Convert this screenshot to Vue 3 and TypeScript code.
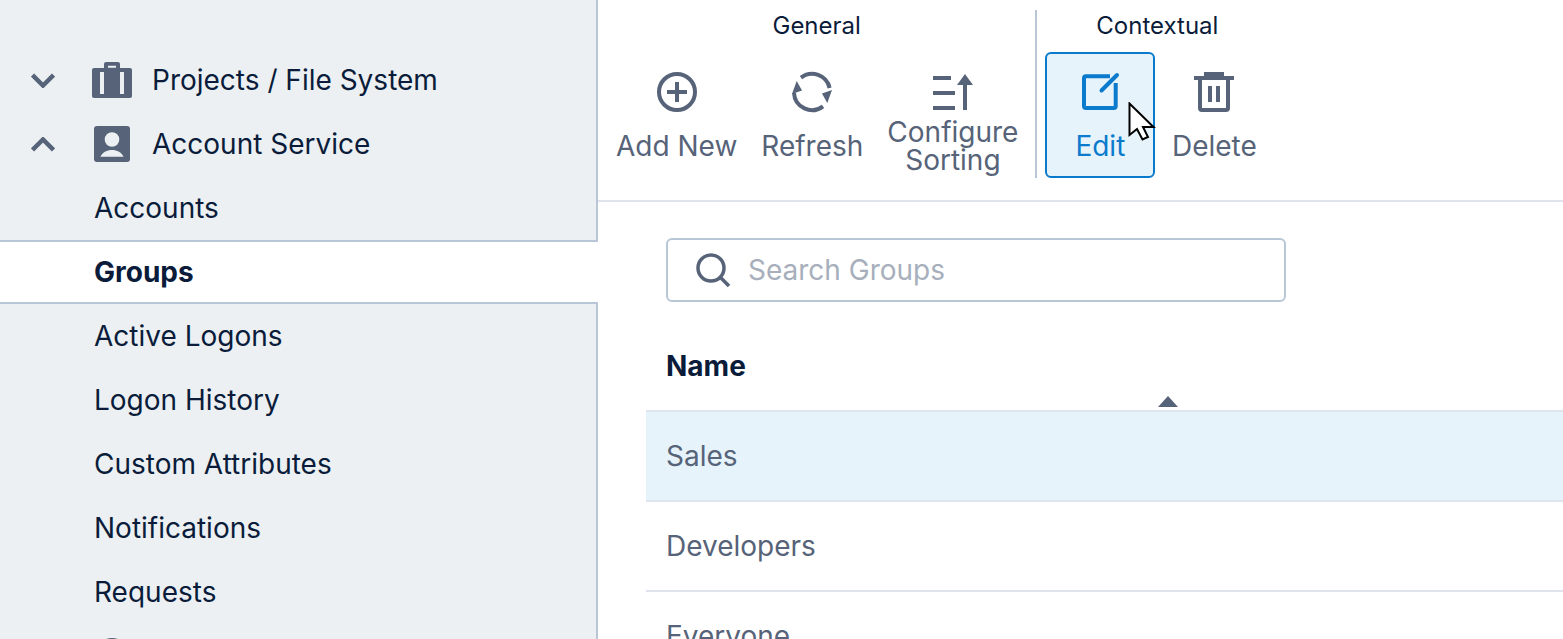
<script setup lang="ts">
const subItems: { label: string; selected?: boolean }[] = [
  { label: 'Accounts' },
  { label: 'Groups', selected: true },
  { label: 'Active Logons' },
  { label: 'Logon History' },
  { label: 'Custom Attributes' },
  { label: 'Notifications' },
  { label: 'Requests' },
]
const rows: { name: string; selected?: boolean }[] = [
  { name: 'Sales', selected: true },
  { name: 'Developers' },
  { name: 'Everyone' },
]
</script>

<template>
  <div class="app">
    <aside class="sidebar">
      <div class="nav-row">
        <svg class="chevron" width="24" height="15" viewBox="0 0 24 15"><path d="M1.500 2 12 12.500 22.500 2" /></svg>
        <svg class="nav-icon" width="40" height="36" viewBox="0 0 40 36">
          <path class="solid" fill-rule="evenodd" d="M12 6V2a2 2 0 0 1 2-2h12a2 2 0 0 1 2 2v4h10a2 2 0 0 1 2 2v26a2 2 0 0 1-2 2H2a2 2 0 0 1-2-2V8a2 2 0 0 1 2-2h10ZM16 3.700V5.700h8V3.700h-8ZM8 10v22h4V10H8Zm20 0v22h4V10h-4Z" />
        </svg>
        <span>Projects / File System</span>
      </div>
      <div class="nav-row">
        <svg class="chevron" width="24" height="15" viewBox="0 0 24 15"><path d="M1.500 13 12 2.500 22.500 13" /></svg>
        <svg class="nav-icon person" width="36" height="36" viewBox="0 0 36 36">
          <path class="solid" fill-rule="evenodd" d="M3 0h30a3 3 0 0 1 3 3v30a3 3 0 0 1-3 3H3a3 3 0 0 1-3-3V3a3 3 0 0 1 3-3Zm15 6.200a7.300 7.300 0 1 0 0 14.600 7.300 7.300 0 0 0 0-14.600ZM6.500 30.700h23C28 26.500 23 24 18 24S8 26.500 6.500 30.700Z" />
        </svg>
        <span>Account Service</span>
      </div>
      <div
        v-for="item in subItems"
        :key="item.label"
        class="sub-row"
        :class="{ selected: item.selected }"
      >{{ item.label }}</div>
      <div class="nav-row clipped">
        <svg class="nav-icon person" width="36" height="36" viewBox="0 0 36 36"><circle class="solid" cx="18" cy="18" r="18" /></svg>
      </div>
    </aside>

    <main class="main">
      <div class="toolbar">
        <section class="group">
          <h3>General</h3>
          <div class="buttons">
            <button class="tool">
              <svg width="40" height="40" viewBox="0 0 40 40">
                <circle class="line" cx="20" cy="20" r="18" />
                <path class="line" d="M20 10v20M10 20h20" />
              </svg>
              <span>Add New</span>
            </button>
            <button class="tool">
              <svg width="40" height="40" viewBox="0 0 40 40">
                <path class="line" d="M9 5.700A18 18 0 0 1 37.600 16M31 34.300A18 18 0 0 1 2 21" />
                <path class="solid" d="M4.700 9 10 18.500 0 22ZM35.300 31 30 21.500 40 18Z" />
              </svg>
              <span>Refresh</span>
            </button>
            <button class="tool">
              <svg width="40" height="40" viewBox="0 0 40 40">
                <path class="line" d="M1 6h18M1 21h22M1 36h22M33 38V12" />
                <path class="solid" d="M33 2 41 13H25Z" />
              </svg>
              <span>Configure Sorting</span>
            </button>
          </div>
        </section>
        <section class="group contextual">
          <h3>Contextual</h3>
          <div class="buttons">
            <button class="tool active">
              <svg width="40" height="40" viewBox="0 0 40 40">
                <path class="line" d="M30 4.300H6a2 2 0 0 0-2 2V34a2 2 0 0 0 2 2h27.700a2 2 0 0 0 2-2V11" />
                <path class="line round" d="M21.500 18.500 37 3" />
              </svg>
              <span>Edit</span>
            </button>
            <button class="tool">
              <svg width="40" height="40" viewBox="0 0 40 40">
                <path class="solid" d="M10 0h20v4h10v4H0V4h10Z" />
                <path class="line" d="M6 7v29a2 2 0 0 0 2 2h24a2 2 0 0 0 2-2V7" />
                <path class="line" d="M16 14v16M24 14v16" />
              </svg>
              <span>Delete</span>
            </button>
          </div>
        </section>
      </div>

      <div class="content">
        <label class="search">
          <svg width="36" height="36" viewBox="0 0 36 36">
            <circle class="line thin" cx="15" cy="16" r="13" />
            <path class="line thin" d="M24.500 25.500 33 34" />
          </svg>
          <span class="placeholder">Search Groups</span>
        </label>

        <div class="table">
          <div class="thead">
            <span class="th">Name</span>
            <svg class="caret" width="20" height="11" viewBox="0 0 20 11"><path d="M10 0 20 11H0Z" /></svg>
          </div>
          <div
            v-for="row in rows"
            :key="row.name"
            class="tr"
            :class="{ selected: row.selected }"
          >{{ row.name }}</div>
        </div>
      </div>
    </main>

    <svg class="cursor" width="28" height="40" viewBox="0 0 28 40">
      <path d="M1.500 1.500V33L9 27 14.500 37.500 20 35 15 25H25.500Z" />
    </svg>
  </div>
</template>

<style>
html,
body {
  margin: 0;
  background: #fff;
}
</style>

<style scoped>
.app {
  position: relative;
  display: flex;
  width: 1563px;
  height: 639px;
  overflow: hidden;
  background: #fff;
  color: #0a1c3a;
  font-family: Inter, "Noto Sans", sans-serif;
  font-size: 28px;
}

.sidebar {
  flex: none;
  box-sizing: border-box;
  width: 598px;
  padding-top: 48px;
  background: #ecf0f3;
  border-right: 2px solid #b9c6d6;
}

.nav-row {
  display: flex;
  align-items: center;
  height: 64px;
}

.nav-row span {
  margin-left: 20px;
}

.chevron {
  flex: none;
  margin-left: 31px;
  margin-right: 37px;
  fill: none;
  stroke: #566378;
  stroke-width: 4.5;
}

.nav-icon {
  flex: none;
  width: 40px;
}

.nav-icon.person {
  padding: 0 2px;
  width: 36px;
}

.clipped .nav-icon {
  margin-left: 92px;
}

.solid {
  fill: #566378;
}

.line {
  fill: none;
  stroke: #566378;
  stroke-width: 4;
}

.line.thin {
  stroke-width: 3.5;
}

.line.round {
  stroke-linecap: round;
}

.sub-row {
  box-sizing: border-box;
  display: flex;
  align-items: center;
  height: 64px;
  padding-left: 94px;
}

.sub-row.selected {
  margin-right: -2px;
  position: relative;
  background: #fff;
  border-top: 2px solid #b9c6d6;
  border-bottom: 2px solid #b9c6d6;
  font-weight: 700;
}

.main {
  flex: 1;
  min-width: 0;
}

.toolbar {
  display: flex;
  box-sizing: border-box;
  height: 202px;
  padding: 10px 0 0 8px;
  border-bottom: 2px solid #dfe3ee;
}

.group {
  display: flex;
  flex-direction: column;
  height: 168px;
}

.group h3 {
  margin: 0;
  height: 42px;
  padding-top: 1px;
  box-sizing: border-box;
  font-size: 24px;
  font-weight: 400;
  line-height: 30px;
  text-align: center;
}

.contextual {
  margin-left: 8px;
  padding-left: 8px;
  border-left: 2px solid #b9c6d6;
}

.buttons {
  display: flex;
  gap: 4px;
}

.tool {
  box-sizing: border-box;
  display: flex;
  flex-direction: column;
  align-items: center;
  min-width: 110px;
  height: 126px;
  padding: 18px 8px 0;
  border: 2px solid transparent;
  border-radius: 6px;
  background: none;
  color: #566378;
  font: inherit;
}

.tool svg {
  flex: none;
  overflow: visible;
}

.tool span {
  display: flex;
  align-items: center;
  height: 60px;
  margin-top: 4px;
  max-width: 130px;
  line-height: 28px;
  text-align: center;
}

.tool.active {
  background: #e6f3fb;
  border-color: #0a7acc;
  color: #0a7acc;
}

.tool.active .line {
  stroke: #0a7acc;
}

.content {
  padding: 36px 0 0 48px;
}

.search {
  box-sizing: border-box;
  display: flex;
  align-items: center;
  width: 620px;
  height: 64px;
  margin-left: 20px;
  padding-left: 28px;
  border: 2px solid #b9c6d6;
  border-radius: 6px;
}

.search svg {
  flex: none;
}

.placeholder {
  margin-left: 16px;
  color: #a7afbc;
}

.table {
  width: 1044px;
  margin-top: 28px;
}

.thead {
  box-sizing: border-box;
  display: flex;
  flex-direction: column;
  height: 82px;
  border-bottom: 2px solid #dfe3ee;
}

.th {
  margin-left: 20px;
  height: 64px;
  line-height: 72px;
  font-weight: 700;
}

.caret {
  align-self: center;
  margin-top: 2px;
  fill: #566378;
}

.tr {
  box-sizing: border-box;
  display: flex;
  align-items: center;
  height: 90px;
  padding-left: 20px;
  border-bottom: 2px solid #dfe3ee;
  color: #566378;
}

.tr.selected {
  background: #e6f3fb;
}

.cursor {
  position: absolute;
  left: 1128px;
  top: 102px;
  fill: #fff;
  stroke: #000;
  stroke-width: 2;
}
</style>
